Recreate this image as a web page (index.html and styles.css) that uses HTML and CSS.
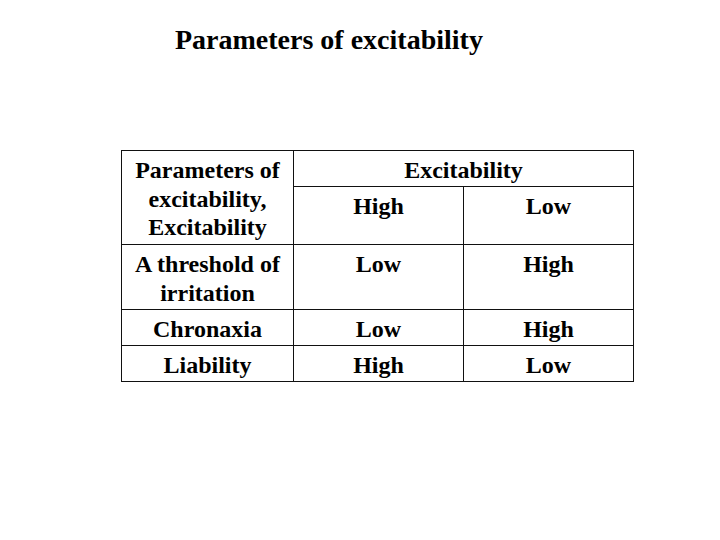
FILE: index.html
```html
<!DOCTYPE html>
<html>
<head>
<meta charset="utf-8">
<link rel="stylesheet" href="styles.css">
</head>
<body>
<div class="slide">
  <h1 class="title">Parameters of excitability</h1>
  <table class="params">
    <colgroup>
      <col class="c1"><col class="c2"><col class="c3">
    </colgroup>
    <tr class="r1">
      <td rowspan="2">Parameters of<br>excitability,<br>Excitability</td>
      <td colspan="2">Excitability</td>
    </tr>
    <tr class="r2">
      <td>High</td>
      <td>Low</td>
    </tr>
    <tr class="r3">
      <td>A threshold of<br>irritation</td>
      <td>Low</td>
      <td>High</td>
    </tr>
    <tr class="r4">
      <td>Chronaxia</td>
      <td>Low</td>
      <td>High</td>
    </tr>
    <tr class="r5">
      <td>Liability</td>
      <td>High</td>
      <td>Low</td>
    </tr>
  </table>
</div>
</body>
</html>
```

FILE: styles.css
```css
html, body {
  margin: 0;
  padding: 0;
  background: #fff;
}
.slide {
  width: 720px;
  height: 540px;
  font-family: "Liberation Serif", "Times New Roman", serif;
  color: #000;
  padding-top: 24px;
  box-sizing: border-box;
}
.title {
  margin: 0 0 0 175px;
  font-size: 28px;
  line-height: 32px;
  font-weight: bold;
}
.params {
  margin: 94px 0 0 121px;
  border-collapse: collapse;
  table-layout: fixed;
  width: 512px;
  font-size: 24px;
  font-weight: bold;
  line-height: 28.5px;
}
.c1 { width: 172px; }
.c2 { width: 170px; }
.c3 { width: 170px; }
.params td {
  border: 1px solid #111;
  padding: 5px 0 0 0;
  text-align: center;
  vertical-align: top;
  box-sizing: border-box;
}
.r1 { height: 36px; }
.r2 { height: 58px; }
.r3 { height: 65px; }
.r4 { height: 36px; }
.r5 { height: 36px; }
```
